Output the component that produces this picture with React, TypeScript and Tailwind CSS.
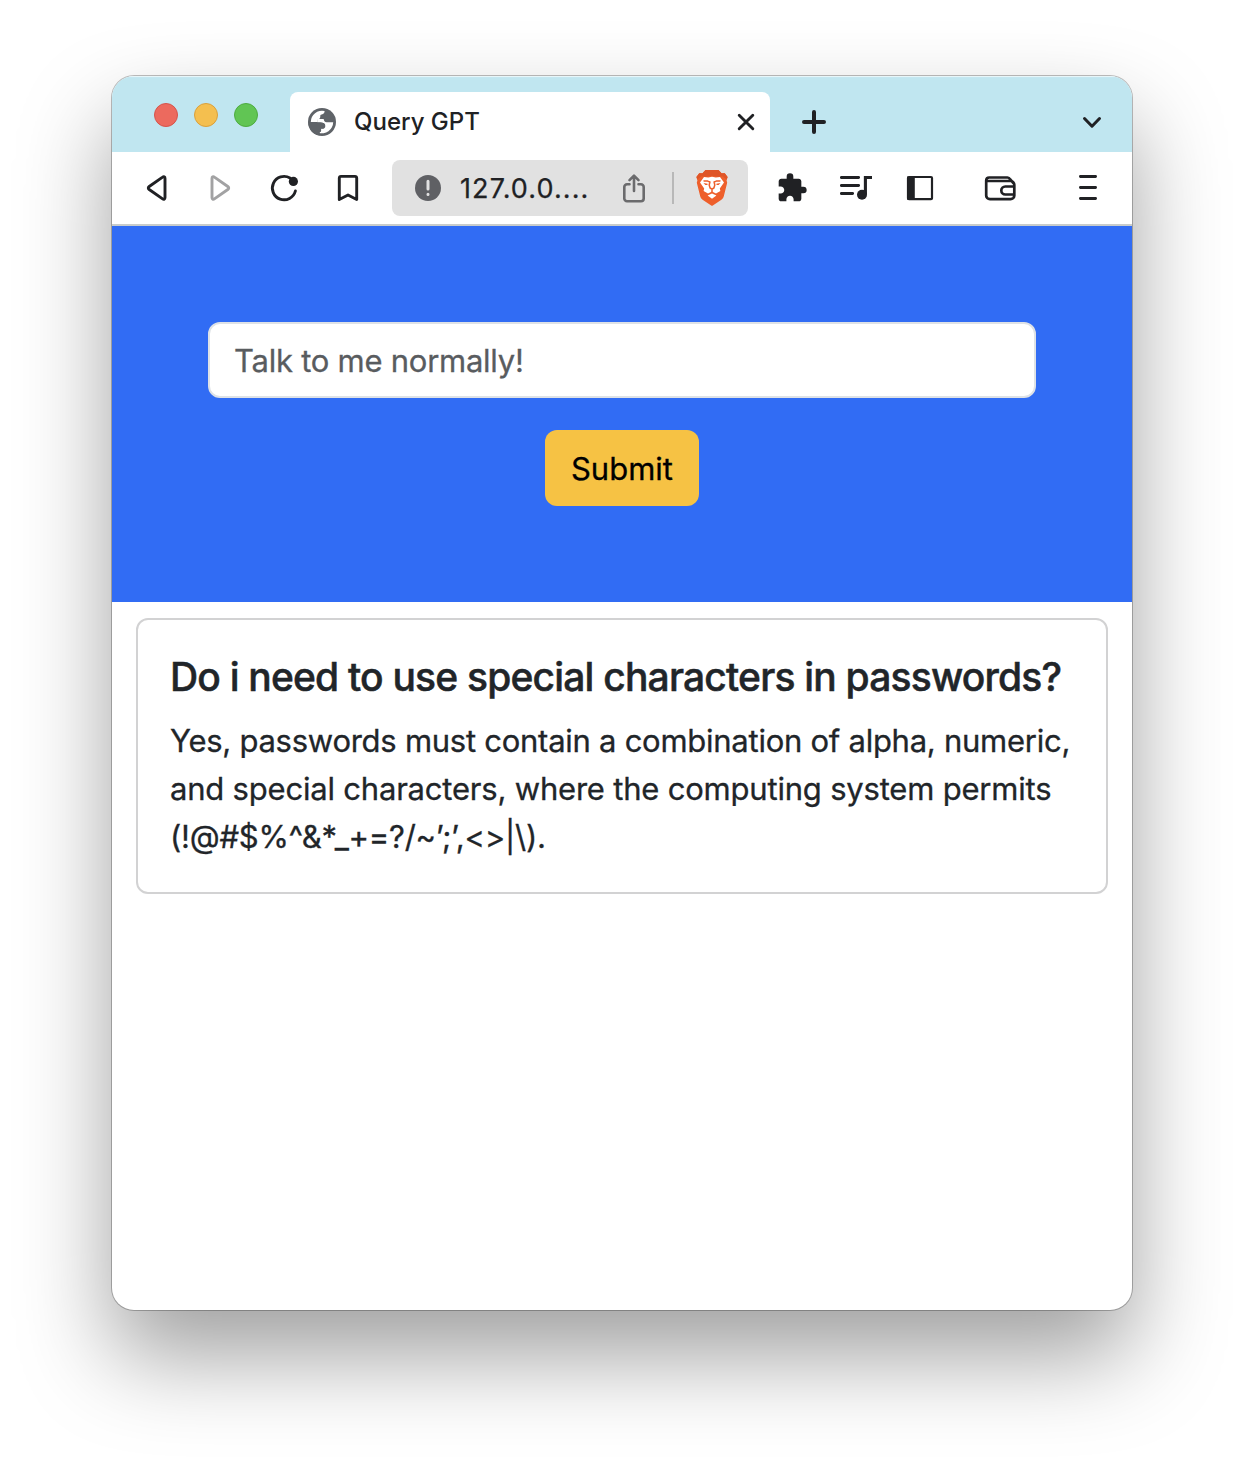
import type { ReactNode } from "react";
import { MdExtension } from "react-icons/md";

const INK = "#202124";

type GlyphProps = { children: ReactNode; color?: string; className?: string };

function Glyph({ children, color = INK, className = "" }: GlyphProps) {
  return (
    <svg
      viewBox="0 0 32 32"
      className={`size-8 shrink-0 ${className}`}
      fill="none"
      stroke={color}
      strokeWidth="2.9"
      strokeLinecap="round"
      strokeLinejoin="round"
    >
      {children}
    </svg>
  );
}

function IconButton({ label, children }: { label: string; children: ReactNode }) {
  return (
    <button aria-label={label} className="flex h-14 w-16 shrink-0 items-center justify-center">
      {children}
    </button>
  );
}

function Globe() {
  return (
    <svg viewBox="0 0 32 32" className="size-8 shrink-0">
      <circle cx="16" cy="16" r="14" fill="#5f6368" />
      <path fill="#fff" d="M4.800 16A11.200 11.200 0 0 1 18.600 5.100c0 2-.9 3-2.900 3.300-1.200.1-1.400.7-1.400 1.900 0 1.900-.8 2.900-2.500 3.200l-.1 2.500z" />
      <path fill="#fff" d="M11.600 12.900h6.100c.1 2 1 3.200 2.900 3.400h6.600A11.200 11.200 0 0 1 12.400 26.700v-3.900h3.900c2 0 3-1.200 3-2.900 0-2-1.100-3.200-3.100-3.200h-4.800z" />
      <path fill="#5f6368" d="M2.400 16.200h10.500c4.200 0 5.900 1.300 5.900 3.500 0 2-1.500 2.900-3.700 2.900v2.500c0 .6-.4 1.200-1.300 1.200v2.900C7 29 2.400 23 2.400 16.200z" />
    </svg>
  );
}

function BraveLogo() {
  return (
    <svg viewBox="0 0 36 36" className="size-9 shrink-0">
      <path fill="#ee5f2b" d="M11.500 0h13l3 3.200h3.300L33.600 7l-1 3.500.6 2.300-3.400 13.400c-.4 1.500-1.200 2.600-2.400 3.500L18.800 35.500q-.8.6-1.600 0L8.600 29.700c-1.200-.9-2-2-2.400-3.500L2.800 12.800l.6-2.300-1-3.500 2.800-3.800h3.300z" />
      <path fill="#df5527" d="M11.500 0h13l3 3.200h3.300L33.600 7l-1 2.500-4-3.200-4.300.5-6.300-1-6.300 1-4.300-.5-4 3.200-1-2.500 2.800-3.800h3.300z" />
      <path fill="#fff" d="m10 6.900 4.200.6L18 6.700l3.800.8 4.200-.6 4 5.500-4.200 6.200.6 2.300-4.400 2.600-4-1.900-4 1.900-4.400-2.600.6-2.300L6 12.400z" />
      <path fill="#fff" d="m18 23.600 4.400 2-4.400 3.100-4.400-3.100z" />
      <path stroke="#ee5f2b" strokeWidth="1.500" fill="none" strokeLinecap="round" strokeLinejoin="round" d="m10 10.900 3.700.2 2.200.9-.7 3 .9 3 1.900 1.200 1.900-1.200.9-3-.7-3 2.200-.9 3.700-.2M18 19.200v3" />
      <path fill="#ee5f2b" d="m9.500 12.900 4.200.9-.3 1.300-2.100-.2zM26.500 12.900l-4.200.9.300 1.300 2.100-.2z" />
    </svg>
  );
}

function TabStrip() {
  return (
    <div className="flex h-[76px] shrink-0 items-end bg-[#c0e6f0] shadow-[inset_0_2px_1px_-1px_#ffffffb0]">
      <div className="flex w-[178px] gap-4 self-start pt-[27px] pl-[42px]">
        <span className="size-6 rounded-full border border-[#d5544b] bg-[#ec6a5e]" />
        <span className="size-6 rounded-full border border-[#d9a03c] bg-[#f4bf4f]" />
        <span className="size-6 rounded-full border border-[#4eab40] bg-[#61c554]" />
      </div>
      <div className="flex h-[60px] w-[480px] items-center rounded-t-lg bg-white pr-2 pl-4">
        <Globe />
        <span className="ml-4 grow text-[24px] leading-8 font-medium">Query GPT</span>
        <Glyph>
          <path d="M9.200 9.200 22.800 22.800M22.800 9.200 9.200 22.800" />
        </Glyph>
      </div>
      <div className="flex h-[60px] grow items-center justify-between pr-6 pl-7">
        <Glyph>
          <path strokeWidth="4" d="M16 6v20M6 16h20" />
        </Glyph>
        <Glyph>
          <path strokeWidth="3" d="m8.500 12.500 7.500 7.700 7.500-7.700" />
        </Glyph>
      </div>
    </div>
  );
}

function AddressBar() {
  return (
    <div className="ml-3 flex h-14 w-[356px] shrink-0 items-center rounded-lg bg-[#e1e1e1] pl-5">
      <Glyph>
        <circle cx="16" cy="16" r="13" fill="#5f6064" stroke="none" />
        <path stroke="#e1e1e1" strokeWidth="3" d="M16 9.300v7.600M16 22.300v.1" />
      </Glyph>
      <span className="mt-0.5 ml-4 w-[158px] text-[27px] leading-8 tracking-[1.1px] whitespace-nowrap [-webkit-text-stroke:0.25px]">127.0.0....</span>
      <Glyph color="#6b6b6d">
        <path strokeWidth="2.600" d="M11.500 12.300H9a2.700 2.700 0 0 0-2.700 2.700v11.500a2.700 2.700 0 0 0 2.700 2.700h14a2.700 2.700 0 0 0 2.700-2.700V15a2.700 2.700 0 0 0-2.700-2.700h-2.500M16 19V4M11.500 8.200 16 3.700l4.500 4.500" />
      </Glyph>
      <span className="mr-5 ml-[22px] h-8 w-0.5 bg-[#b8b8b8]" />
      <BraveLogo />
    </div>
  );
}

function Toolbar() {
  const triangle = "M25 6.400v19.200c0 1.600-1.200 2.200-2.400 1.300L9.200 17.500c-1.200-.9-1.200-2.100 0-3L22.600 5.100c1.200-.9 2.400-.3 2.400 1.300z";
  return (
    <div className="flex h-[74px] shrink-0 items-center border-b-2 border-[#c8cccb] bg-white pl-3">
      <IconButton label="Back">
        <Glyph>
          <path d={triangle} />
        </Glyph>
      </IconButton>
      <IconButton label="Forward">
        <Glyph color="#a2a2a3">
          <path transform="matrix(-1 0 0 1 33 0)" d={triangle} />
        </Glyph>
      </IconButton>
      <IconButton label="Reload">
        <Glyph>
          <path d="M27.400 19A11.700 11.700 0 1 1 22 6" />
          <circle cx="25.400" cy="9.400" r="4.600" fill={INK} stroke="none" />
        </Glyph>
      </IconButton>
      <IconButton label="Bookmark">
        <Glyph>
          <path d="M9 4.400h14A1.700 1.700 0 0 1 24.700 6v21.500L16 23l-8.700 4.500V6A1.700 1.700 0 0 1 9 4.400z" />
        </Glyph>
      </IconButton>
      <AddressBar />
      <span className="w-3 shrink-0" />
      <IconButton label="Extensions">
        <MdExtension className="size-8 text-[#202124]" />
      </IconButton>
      <IconButton label="Playlist">
        <Glyph>
          <path d="M1.400 5.500h17.200M1.400 13.500h17.200M1.400 21.500h11.200" />
          <path strokeWidth="3.100" strokeLinecap="butt" strokeLinejoin="miter" d="M25.400 22V5.500H32" />
          <circle cx="22" cy="22.700" r="5" fill={INK} stroke="none" />
        </Glyph>
      </IconButton>
      <IconButton label="Sidebar">
        <Glyph>
          <rect x="4" y="5" width="24" height="22.200" rx="1" strokeWidth="2.200" />
          <path stroke="none" fill={INK} d="M3.200 4.500h7.600v23.200H3.200z" />
        </Glyph>
      </IconButton>
      <span className="w-4 shrink-0" />
      <IconButton label="Wallet">
        <Glyph>
          <path strokeWidth="2.700" d="M2.200 8.500v15a3.700 3.700 0 0 0 3.700 3.700h20.700a3.700 3.700 0 0 0 3.700-3.700V12.700a3.700 3.700 0 0 0-3.700-3.700H3.500M2.200 8.500c0-2.100 1-3 3-3h18.300c1.300 0 2 .7 2.700 2l3.200 3.500M30 14.500h-8.700a4 4 0 0 0 0 8H30" />
        </Glyph>
      </IconButton>
      <span className="w-6 shrink-0" />
      <IconButton label="Menu">
        <Glyph>
          <path strokeWidth="2.800" d="M8.400 4.500h15.200M8.400 15.500h15.200M8.400 26.500h15.200" />
        </Glyph>
      </IconButton>
    </div>
  );
}

function QueryForm() {
  return (
    <form className="flex h-[376px] shrink-0 flex-col items-center gap-8 bg-[#316cf4] px-24 pt-24 [-webkit-text-stroke:0.3px]" onSubmit={(e) => e.preventDefault()}>
      <input
        aria-label="Question"
        placeholder="Talk to me normally!"
        className="h-[76px] w-full rounded-xl border-2 border-[#dee2e6] bg-white px-6 text-[31px] tracking-[-0.25px] placeholder:text-[#595c5f]"
      />
      <button className="h-[76px] w-[154px] rounded-xl bg-[#f6c244] pt-0.5 text-[31px] text-black">Submit</button>
    </form>
  );
}

function AnswerCard() {
  return (
    <article className="mx-6 mt-4 h-[276px] rounded-xl border-2 border-[#d2d2d3] px-8 pt-[33px] text-[#212529]">
      <h5 className="mb-4 text-[39px] leading-[48px] font-medium tracking-[-0.81px] whitespace-nowrap [-webkit-text-stroke:0.5px]">
        Do i need to use special characters in passwords?
      </h5>
      <p className="text-[31px] leading-[48px] tracking-[-0.26px] whitespace-nowrap [-webkit-text-stroke:0.3px]">
        Yes, passwords must contain a combination of alpha, numeric,
        <br />
        <span className="tracking-[-0.2px]">and special characters, where the computing system permits</span>
        <br />
        {"(!@#$%^&*_+=?/~’;’,<>|\\)."}
      </p>
    </article>
  );
}

export default function App() {
  return (
    <div className="h-[1458px] w-[1244px] overflow-hidden bg-white px-28 pt-[76px] font-[Inter,sans-serif] text-[#202124]">
      <main className="flex h-[1234px] flex-col overflow-hidden rounded-[22px] bg-white shadow-[0_0_0_1px_#00000040,0_46px_92px_#00000060]">
        <TabStrip />
        <Toolbar />
        <QueryForm />
        <AnswerCard />
      </main>
    </div>
  );
}
